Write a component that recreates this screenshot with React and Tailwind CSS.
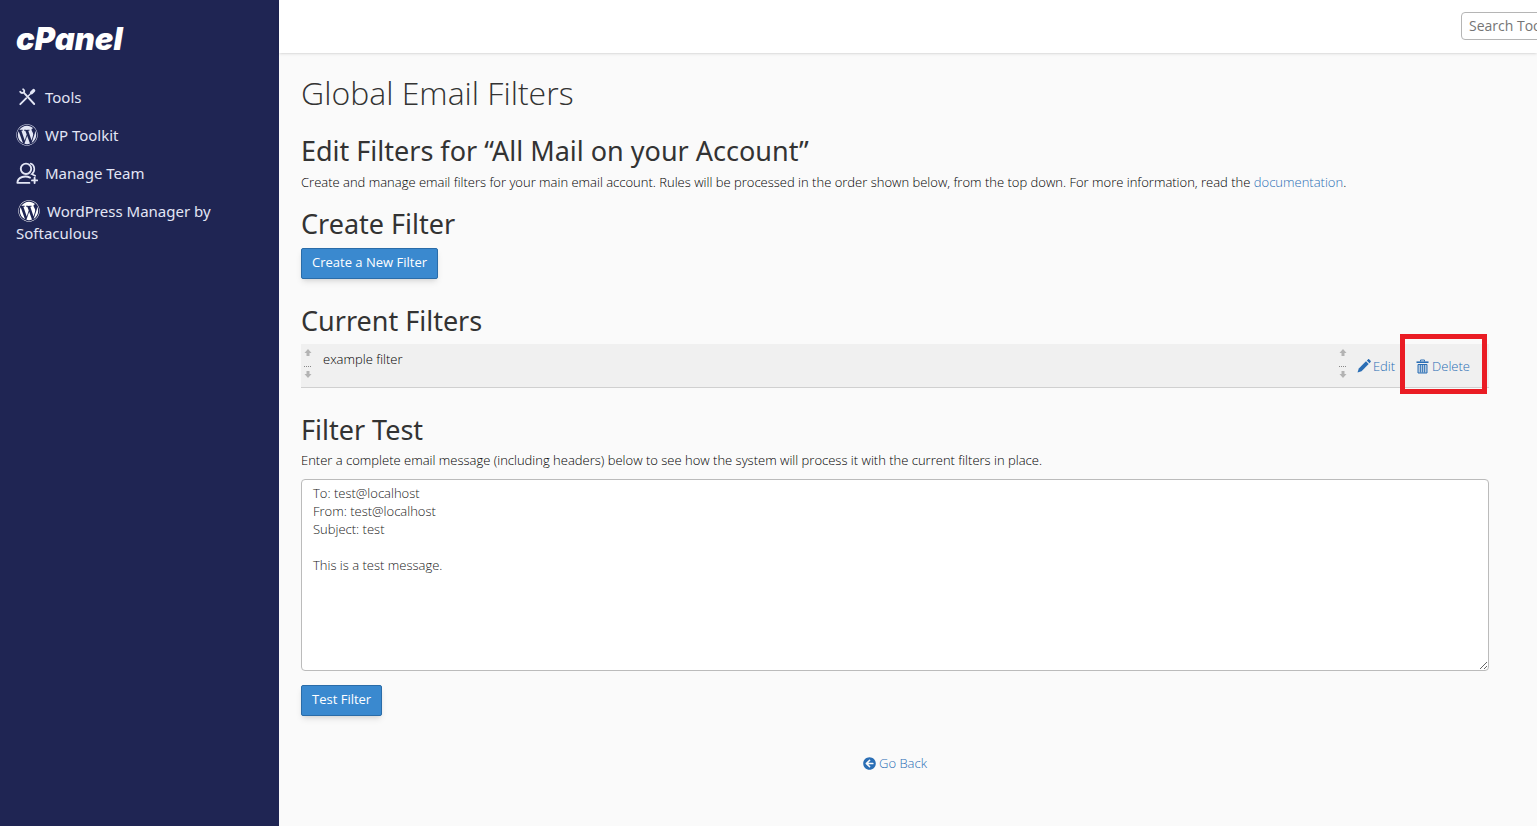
import React, { useState } from 'react';
import { FaWordpress, FaArrowCircleLeft } from 'react-icons/fa';

const ToolsIcon = () => (
  <svg viewBox="0 0 22 22" className="w-[22px] h-[22px]" fill="none" stroke="currentColor" strokeLinecap="round">
    <path d="M4.200 5.800C5.400 7.600 6.900 7.100 7.800 6.200C8.600 5.300 8.500 4 7.100 3.200" strokeWidth="1.800" />
    <path d="M7.800 6.600L18.200 18" strokeWidth="1.900" />
    <path d="M4.300 18.200l6-6" strokeWidth="1.900" />
    <path d="M12.300 9.900l2.200-2.200" strokeWidth="1.400" />
    <path d="M15.600 6.600l2-2" strokeWidth="3.400" />
  </svg>
);

const TeamIcon = () => (
  <svg viewBox="0 0 22 22" className="w-[22px] h-[22px]" fill="none" stroke="currentColor" strokeWidth="1.9" strokeLinecap="round">
    <circle cx="10" cy="6.800" r="5.200" />
    <path d="M14.600 1.500c4.400 1.500 5 8 1.200 10.600l3.400 1.700" strokeWidth="1.600" />
    <path d="M14 15.600c-4.300-2-12.300-1.300-12.600 5.300h12" strokeLinejoin="round" />
    <path d="M18.600 15.800v5.200M16 18.400h5.200" />
  </svg>
);

const PencilIcon = () => (
  <svg viewBox="0 0 14 14" className="h-[14px] w-[14px]" fill="currentColor">
    <path d="M.5 13.500l1.300-4L9 2.300l2.700 2.700-7.200 7.200z" />
    <path d="M9.800 1.500L11 .4c.4-.4.900-.4 1.300 0l1.300 1.300c.4.4.400.9 0 1.300l-1.100 1.200z" />
  </svg>
);

const TrashIcon = () => (
  <svg viewBox="0 0 13 15" className="w-[13px] h-[15px]" fill="none" stroke="currentColor">
    <path d="M4.500 2.500V1h4v1.500" />
    <path d="M0.500 3.200h12" strokeWidth="1.600" />
    <path d="M2 5.500h9v8.500H2z" fill="currentColor" fillOpacity="0.300" />
    <path d="M4.500 5.500v8M6.500 5.500v8M8.500 5.500v8" strokeWidth="0.800" />
  </svg>
);

const SortHandle = () => (
  <svg viewBox="0 0 8 30" className="w-2 h-[30px] shrink-0 text-[#b3b3b3]" fill="currentColor" aria-hidden="true">
    <path d="M4 0L7.500 4H5.500V7h-3V4H.5z" />
    <path d="M0 17.500h8" stroke="#888" strokeWidth="1" strokeDasharray="1 1" />
    <path d="M4 29L.5 25h2v-3h3v3h2z" />
  </svg>
);

const navItems = [
  { label: 'Tools', icon: <ToolsIcon /> },
  { label: 'WP Toolkit', icon: <FaWordpress className="w-[22px] h-[22px]" /> },
  { label: 'Manage Team', icon: <TeamIcon /> },
  { label: 'WordPress Manager by Softaculous', icon: <FaWordpress className="ml-[2px] w-[22px] h-[22px] text-white" /> },
];

const sampleMessage = `To: test@localhost
From: test@localhost
Subject: test

This is a test message.`;

const Sidebar = () => (
  <aside className="w-[279px] shrink-0 bg-[#1f2553] px-4 pt-5 text-[#e3e6f5]">
    <a href="#home" className="block font-['Inter',sans-serif] text-[31px] leading-[38px] font-black italic text-white">
      cPanel
    </a>
    <nav className="mt-7 flex flex-col gap-4 pr-8 font-['Noto_Sans',sans-serif] font-normal">
      {navItems.map((item) => (
        <a key={item.label} href="#nav" className="block text-[15px] leading-[22px]">
          <span className="mr-[7px] inline-block h-[22px] align-top">{item.icon}</span>
          {item.label}
        </a>
      ))}
    </nav>
  </aside>
);

const SectionTitle = ({ children }) => (
  <h2 className="font-['Noto_Sans',sans-serif] text-[27px] leading-8 font-normal text-[#333]">{children}</h2>
);

const PrimaryButton = ({ children }) => (
  <button
    type="button"
    className="block h-[31px] rounded-xs border border-[#2a6ca8] bg-[#3a89cf] px-[10px] pb-[4px] text-[13px] font-normal text-white shadow-md"
  >
    {children}
  </button>
);

const FilterRow = ({ name }) => (
  <li className="flex h-11 border-b border-[#d0d0d0] bg-[#f0f0f0] pl-[3px] pr-[19px]">
    <div className="flex flex-1 pt-[5px]">
      <SortHandle />
      <span className="ml-[11px] pt-[1px] leading-[18px]">{name}</span>
    </div>
    <div className="flex pt-[5px]">
      <SortHandle />
      <a href="#edit" className="ml-[10px] flex h-[34px] items-center gap-[2px] text-[#2a6eb5]">
        <PencilIcon />
        Edit
      </a>
      <a href="#delete" className="relative ml-[21px] flex h-[34px] items-center gap-[3px] text-[#2a6eb5]">
        <TrashIcon />
        Delete
        <span className="pointer-events-none absolute -left-4 -right-[17px] -top-[15px] h-[60px] border-[5px] border-[#ea1c24]" />
      </a>
    </div>
  </li>
);

const App = () => {
  const [message, setMessage] = useState(sampleMessage);

  return (
    <div className="flex min-h-screen overflow-hidden bg-[#fafafa] font-['Open_Sans',sans-serif] text-[13px] leading-[18px] font-light text-black">
      <Sidebar />
      <div className="min-w-0 flex-1">
        <header className="flex h-[53px] justify-end overflow-hidden bg-white pt-3 shadow-sm">
          <input
            type="search"
            aria-label="Search Tools"
            placeholder="Search Tools (/)"
            className="-mr-[144px] h-7 w-[220px] shrink-0 rounded-sm border border-[#b5b5b5] bg-white px-[7px] pb-[2px] text-sm font-normal placeholder:text-[#757575]"
          />
        </header>

        <main className="pl-[22px] pr-12 pt-5">
          <h1 className="mb-[22px] text-[32px] leading-10 text-[#333]">Global Email Filters</h1>

          <SectionTitle>Edit Filters for “All Mail on your Account”</SectionTitle>
          <p className="mt-[6px] mb-[17px]">
            Create and manage email filters for your main email account. Rules will be processed in the order shown below, from the top down. For more information, read the{' '}
            <a href="#documentation" className="text-[#2a6eb5]">documentation</a>.
          </p>

          <SectionTitle>Create Filter</SectionTitle>
          <div className="mt-2 mb-[26px]">
            <PrimaryButton>Create a New Filter</PrimaryButton>
          </div>

          <SectionTitle>Current Filters</SectionTitle>
          <ul className="mt-[7px] mb-[26px]">
            <FilterRow name="example filter" />
          </ul>

          <SectionTitle>Filter Test</SectionTitle>
          <label htmlFor="message" className="mt-[5px] block">
            Enter a complete email message (including headers) below to see how the system will process it with the current filters in place.
          </label>
          <textarea
            id="message"
            value={message}
            onChange={(e) => setMessage(e.target.value)}
            className="mt-[10px] mb-[14px] block h-48 w-full rounded-sm border border-[#bbb] bg-white px-[11px] py-1 text-[#222]"
          />
          <PrimaryButton>Test Filter</PrimaryButton>

          <div className="mt-[38px] flex justify-center">
            <a href="#back" className="flex items-center gap-[3px] text-[#2a6eb5]">
              <FaArrowCircleLeft className="h-[13px] w-[13px]" />
              Go Back
            </a>
          </div>
        </main>
      </div>
    </div>
  );
};

export default App;
